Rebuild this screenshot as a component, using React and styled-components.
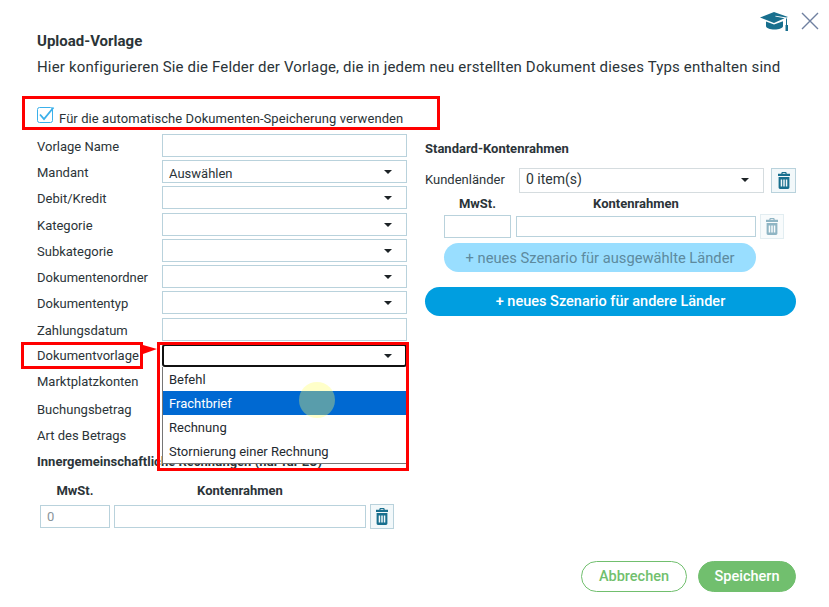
import React from 'react';
import styled, { createGlobalStyle } from 'styled-components';

const GlobalStyle = createGlobalStyle`
    html, body {
        margin: 0;
        padding: 0;
        background: #fff;
    }
    body {
        font-family: Roboto, "Liberation Sans", sans-serif;
        color: #2b3438;
    }
`;

const Page = styled.div`
    position: relative;
    width: 829px;
    height: 607px;
    overflow: hidden;
    box-sizing: border-box;
    padding: 0 33px 0 37px;
    background: #fff;
`;

const TopIcons = styled.div`
    display: flex;
    justify-content: flex-end;
    align-items: center;
    gap: 12px;
    height: 33px;
    padding-top: 9px;
    margin-right: -23px;
    box-sizing: border-box;
`;

const Title = styled.h1`
    margin: 0;
    font-size: 15px;
    font-weight: 700;
    line-height: 16px;
`;

const Description = styled.p`
    margin: 9px 0 0;
    font-size: 15px;
    line-height: 18px;
    letter-spacing: 0.16px;
    white-space: nowrap;
`;

const CheckRow = styled.label`
    display: flex;
    align-items: center;
    gap: 4px;
    height: 18px;
    margin-top: 32px;
    font-size: 13px;
    letter-spacing: 0.08px;
`;

const CheckText = styled.span`
    padding-top: 2px;
`;

const CheckSvg = styled.svg`
    align-self: flex-start;
    margin-top: -3px;
    flex: none;
`;

const Columns = styled.div`
    display: grid;
    grid-template-columns: 370px 371px;
    column-gap: 18px;
    margin-top: 6px;
`;

const Column = styled.div`
    display: flex;
    flex-direction: column;
    padding-top: ${({ $top }) => $top || 0}px;
`;

const Row = styled.div`
    display: flex;
    align-items: center;
    height: ${({ $h }) => $h || 26.3}px;
    margin-top: ${({ $top }) => $top || 0}px;
    font-size: 13px;
`;

const Label = styled.span`
    width: ${({ $w }) => $w || 125}px;
    padding-top: ${({ $flush }) => ($flush ? 0 : 2)}px;
    padding-bottom: ${({ $lift }) => ($lift ? 3 : 0)}px;
    flex: none;
    white-space: nowrap;
`;

const Input = styled.div`
    box-sizing: border-box;
    width: ${({ $w }) => $w || 245}px;
    height: ${({ $h }) => $h || 23}px;
    flex: none;
    border: 1px solid #b9d2dc;
    background: #fff;
    font-size: 13px;
    line-height: 21px;
    padding-left: 6px;
    color: ${({ $muted }) => ($muted ? '#8a9499' : '#2b3438')};
`;

const Select = styled(Input)`
    position: relative;
    border-color: ${({ $plain }) => ($plain ? '#d5dcdf' : '#b9d2dc')};
    font-size: ${({ $plain }) => ($plain ? 14 : 13)}px;
    line-height: ${({ $plain }) => ($plain ? 21 : 25)}px;

    &::after {
        content: '';
        position: absolute;
        right: 14px;
        top: 9px;
        border-left: 4px solid transparent;
        border-right: 4px solid transparent;
        border-top: 4px solid #1d2326;
    }
`;

const FocusedSelect = styled(Select)`
    border: 2px solid #111;
    border-radius: 3px;

    &::after {
        top: 8px;
        right: 13px;
    }
`;

const Dropdown = styled.ul`
    position: absolute;
    left: 162px;
    top: 367px;
    box-sizing: border-box;
    width: 245px;
    margin: 0;
    padding: 0;
    list-style: none;
    background: #fff;
    border: 1px solid #767676;
    border-top: none;
    font-size: 13px;
`;

const Option = styled.li`
    height: 24px;
    line-height: 26px;
    padding-left: 6px;
    color: ${({ $active }) => ($active ? '#fff' : '#1f2a30')};
    background: ${({ $active }) => ($active ? '#0069d2' : 'transparent')};
`;

const SectionTitle = styled.div`
    font-size: 13px;
    font-weight: 700;
    line-height: 16px;
    margin-top: ${({ $top }) => $top || 0}px;
    white-space: nowrap;
`;

const ScenarioHead = styled.div`
    display: flex;
    align-items: center;
    gap: ${({ $gap }) => $gap}px;
    height: 20px;
    font-size: 13px;
    font-weight: 700;
    margin-left: ${({ $left }) => $left}px;
    margin-top: ${({ $top }) => $top || 0}px;
`;

const HeadCell = styled.div`
    width: ${({ $w }) => $w}px;
    text-align: center;
    flex: none;
`;

const ScenarioRow = styled.div`
    display: flex;
    align-items: center;
    gap: ${({ $gap }) => $gap || 4}px;
    margin-left: ${({ $left }) => $left}px;
    margin-top: ${({ $top }) => $top || 0}px;
`;

const TrashBtn = styled.button`
    box-sizing: border-box;
    width: ${({ $w }) => $w || 24}px;
    height: 25px;
    padding: 0;
    margin-left: ${({ $left }) => $left || 0}px;
    flex: none;
    display: flex;
    align-items: center;
    justify-content: center;
    background: ${({ $off }) => ($off ? '#f8fbfc' : '#f2f8fa')};
    border: 1px solid ${({ $off }) => ($off ? '#e2edf1' : '#b9d2dc')};
    color: ${({ $off }) => ($off ? '#8fb5c4' : '#186f8e')};
`;

const Pill = styled.button`
    display: block;
    box-sizing: border-box;
    height: 29px;
    width: ${({ $w }) => $w}px;
    margin-left: ${({ $left }) => $left || 0}px;
    margin-top: ${({ $top }) => $top}px;
    border: none;
    border-radius: 15px;
    font-family: inherit;
    font-size: ${({ $light }) => ($light ? 14.7 : 14.5)}px;
    font-weight: ${({ $light }) => ($light ? 400 : 500)};
    background: ${({ $light }) => ($light ? '#99deff' : '#009ee0')};
    color: ${({ $light }) => ($light ? '#5d8a9e' : '#fff')};
`;

const Footer = styled.div`
    position: absolute;
    right: 33px;
    bottom: 15px;
    display: flex;
    gap: 11px;
`;

const FooterBtn = styled.button`
    box-sizing: border-box;
    width: ${({ $w }) => $w}px;
    height: 31px;
    border-radius: 16px;
    border: 1px solid #71bf6e;
    font-family: inherit;
    font-size: 14.5px;
    font-weight: 500;
    background: ${({ $solid }) => ($solid ? '#71bf6e' : '#fff')};
    color: ${({ $solid }) => ($solid ? '#fff' : '#71bf6e')};
`;

// red annotation frames drawn over the screenshot
const Frame = styled.div`
    position: absolute;
    box-sizing: border-box;
    left: ${({ $x }) => $x}px;
    top: ${({ $y }) => $y}px;
    width: ${({ $w }) => $w}px;
    height: ${({ $h }) => $h}px;
    border: 3px solid #f00;
    pointer-events: none;
`;

const Wedge = styled.div`
    position: absolute;
    left: 143px;
    top: 345px;
    border-top: 4px solid transparent;
    border-bottom: 5px solid transparent;
    border-left: 14px solid #f00;
`;

const Pointer = styled.div`
    position: absolute;
    left: 299px;
    top: 382px;
    width: 36px;
    height: 36px;
    border-radius: 50%;
    background: rgba(255, 255, 100, 0.35);
`;

const TrashIcon = () => (
    <svg width="12" height="17" viewBox="0 0 12 17" fill="currentColor">
        <path d="M3.8 0h4.4l.6 1.8H12V4H0V1.800h3.200L3.800 0zM4.700 1l-.2.800h3l-.2-.8H4.700z" fillRule="evenodd" />
        <path
            d="M.6 5h10.800v10.600c0 .8-.6 1.400-1.400 1.400H2c-.8 0-1.400-.6-1.400-1.400V5zM2.700 7.500v7h1.500v-7H2.700zm2.550 0v7h1.500v-7h-1.500zm2.550 0v7h1.500v-7H7.800z"
            fillRule="evenodd"
        />
    </svg>
);

const CheckIcon = () => (
    <CheckSvg width="18" height="18" viewBox="0 0 18 18" fill="none">
        <rect x="0.5" y="2.500" width="15" height="15" rx="2" stroke="#3bb0ea" />
        <path d="M3 9.500l4 4.500L16.500 2.500" stroke="#3bb0ea" strokeWidth="1.800" />
    </CheckSvg>
);

const CapIcon = () => (
    <svg width="29" height="20" viewBox="0 0 29 20" fill="#186f8e">
        <path d="M0 6.500L14 1l14 5-1.500.6-11-1.900-.2.900 9.300 1.700L14 12z" />
        <path d="M6 10.500l8 3 9-3.200v4.900c0 1.600-4 3.300-8.500 3.300S6 16.800 6 15.200z" />
        <path d="M26 7.500h1v6.500h-1z" />
        <path d="M25.500 14h2.500v6h-2.500z" />
    </svg>
);

const CloseIcon = () => (
    <svg width="18" height="18" viewBox="0 0 18 18" stroke="#6f80a0" strokeWidth="1.400">
        <path d="M1 1l16 16M17 1L1 17" />
    </svg>
);

const leftFields = [
    ['Vorlage Name', 'input'],
    ['Mandant', 'select', 'Auswählen'],
    ['Debit/Kredit', 'select'],
    ['Kategorie', 'select'],
    ['Subkategorie', 'select'],
    ['Dokumentenordner', 'select'],
    ['Dokumententyp', 'select'],
    ['Zahlungsdatum', 'input'],
];

const options = ['Befehl', 'Frachtbrief', 'Rechnung', 'Stornierung einer Rechnung'];

export default function App() {
    return (
        <Page>
            <GlobalStyle />
            <TopIcons>
                <CapIcon />
                <CloseIcon />
            </TopIcons>
            <Title>Upload-Vorlage</Title>
            <Description>
                Hier konfigurieren Sie die Felder der Vorlage, die in jedem neu erstellten Dokument dieses Typs enthalten sind
            </Description>
            <CheckRow>
                <CheckIcon />
                <CheckText>Für die automatische Dokumenten-Speicherung verwenden</CheckText>
            </CheckRow>

            <Columns>
                <Column>
                    {leftFields.map(([label, kind, value]) => (
                        <Row key={label}>
                            <Label>{label}</Label>
                            {kind === 'select' ? <Select>{value}</Select> : <Input />}
                        </Row>
                    ))}
                    <Row>
                        <Label $flush>Dokumentvorlage</Label>
                        <FocusedSelect />
                    </Row>
                    <Row $h={26}>
                        <Label $flush>Marktplatzkonten</Label>
                    </Row>
                    <Row $h={30}>
                        <Label $flush>Buchungsbetrag</Label>
                    </Row>
                    <Row $h={22}>
                        <Label $flush>Art des Betrags</Label>
                    </Row>
                    <SectionTitle $top={7}>Innergemeinschaftliche Rechnungen (nur für EU)</SectionTitle>
                    <ScenarioHead $left={3} $gap={4} $top={11}>
                        <HeadCell $w={70}>MwSt.</HeadCell>
                        <HeadCell $w={252}>Kontenrahmen</HeadCell>
                    </ScenarioHead>
                    <ScenarioRow $left={3} $top={3}>
                        <Input $w={70} $muted>0</Input>
                        <Input $w={252} />
                        <TrashBtn><TrashIcon /></TrashBtn>
                    </ScenarioRow>
                </Column>

                <Column $top={9}>
                    <SectionTitle>Standard-Kontenrahmen</SectionTitle>
                    <Row $h={25} $top={11}>
                        <Label $w={94} $flush $lift>Kundenländer</Label>
                        <Select $w={245} $h={25} $plain>0 item(s)</Select>
                        <TrashBtn $w={25} $left={7}><TrashIcon /></TrashBtn>
                    </Row>
                    <ScenarioHead $left={19} $gap={5}>
                        <HeadCell $w={67}>MwSt.</HeadCell>
                        <HeadCell $w={240}>Kontenrahmen</HeadCell>
                    </ScenarioHead>
                    <ScenarioRow $left={19} $gap={5} $top={1}>
                        <Input $w={67} />
                        <Input $w={240} $h={21} />
                        <TrashBtn $off $left={-1}><TrashIcon /></TrashBtn>
                    </ScenarioRow>
                    <Pill $light $w={312} $left={19} $top={4}>+ neues Szenario für ausgewählte Länder</Pill>
                    <Pill $w={371} $top={15}>+ neues Szenario für andere Länder</Pill>
                </Column>
            </Columns>

            <Dropdown>
                {options.map((o) => (
                    <Option key={o} $active={o === 'Frachtbrief'}>{o}</Option>
                ))}
            </Dropdown>
            <Pointer />

            <Frame $x={22} $y={96} $w={418} $h={34} />
            <Frame $x={21} $y={342} $w={122} $h={27} />
            <Frame $x={157} $y={342} $w={252} $h={129} />
            <Wedge />

            <Footer>
                <FooterBtn $w={106}>Abbrechen</FooterBtn>
                <FooterBtn $w={98} $solid>Speichern</FooterBtn>
            </Footer>
        </Page>
    );
}
